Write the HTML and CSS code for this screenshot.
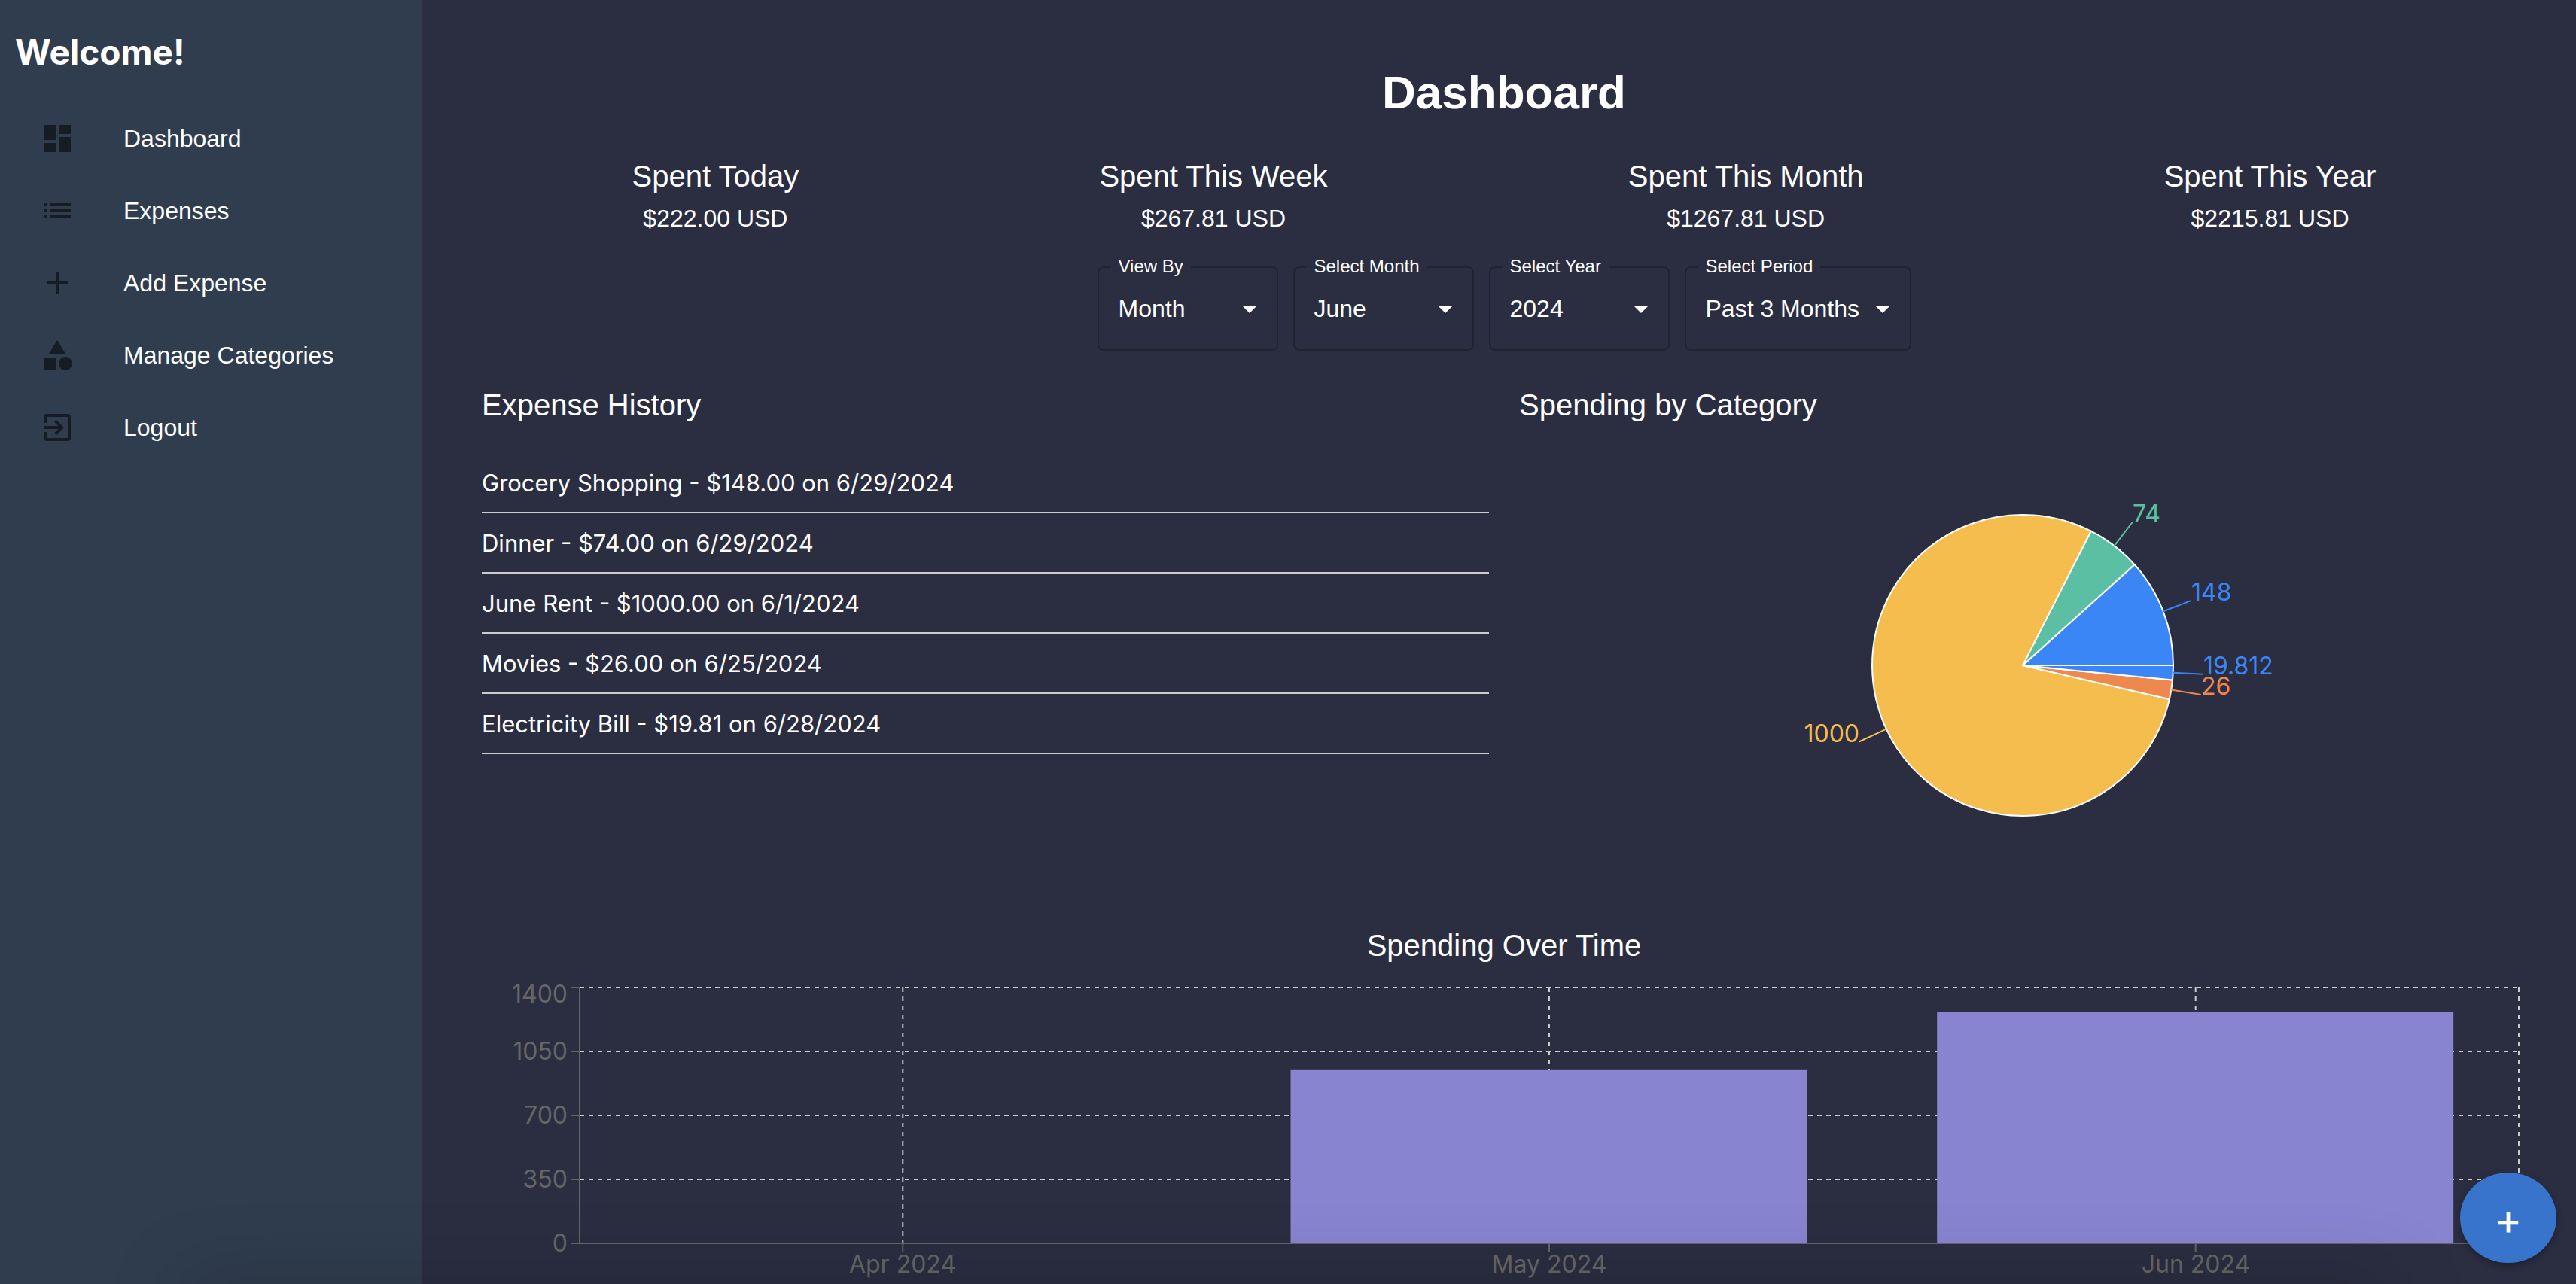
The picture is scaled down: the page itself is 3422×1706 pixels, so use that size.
FILE: index.html
```html
<!DOCTYPE html>
<html lang="en">
<head>
<meta charset="utf-8">
<title>Dashboard</title>
<link rel="stylesheet" href="styles.css">
</head>
<body>
<div class="app">
  <aside class="sidebar">
    <h2 class="welcome">Welcome!</h2>
    <nav class="nav">
      <a class="nav-item" href="#dashboard"><svg class="icon" viewBox="0 0 24 24" aria-hidden="true"><path d="M3 13h8V3H3v10zm0 8h8v-6H3v6zm10 0h8V11h-8v10zm0-18v6h8V3h-8z"/></svg>Dashboard</a>
      <a class="nav-item" href="#expenses"><svg class="icon" viewBox="0 0 24 24" aria-hidden="true"><path d="M3 13h2v-2H3v2zm0 4h2v-2H3v2zm0-8h2V7H3v2zm4 4h14v-2H7v2zm0 4h14v-2H7v2zM7 7v2h14V7H7z"/></svg>Expenses</a>
      <a class="nav-item" href="#add"><svg class="icon" viewBox="0 0 24 24" aria-hidden="true"><path d="M19 13h-6v6h-2v-6H5v-2h6V5h2v6h6v2z"/></svg>Add Expense</a>
      <a class="nav-item" href="#categories"><svg class="icon" viewBox="0 0 24 24" aria-hidden="true"><path d="M12 2l-5.500 9h11z"/><circle cx="17.500" cy="17.500" r="4.500"/><path d="M3 13.500h8v8H3z"/></svg>Manage Categories</a>
      <a class="nav-item" href="#logout"><svg class="icon" viewBox="0 0 24 24" aria-hidden="true"><path d="M10.090 15.590L11.500 17l5-5-5-5-1.410 1.410L12.670 11H3v2h9.670l-2.580 2.590zM19 3H5c-1.110 0-2 .9-2 2v4h2V5h14v14H5v-4H3v4c0 1.100.89 2 2 2h14c1.100 0 2-.9 2-2V5c0-1.100-.9-2-2-2z"/></svg>Logout</a>
    </nav>
  </aside>

  <main class="main">
    <h1 class="title">Dashboard</h1>

    <section class="stats">
      <div class="stat"><h2 class="heading">Spent Today</h2><p class="amount">$222.00 USD</p></div>
      <div class="stat"><h2 class="heading">Spent This Week</h2><p class="amount">$267.81 USD</p></div>
      <div class="stat"><h2 class="heading">Spent This Month</h2><p class="amount">$1267.81 USD</p></div>
      <div class="stat"><h2 class="heading">Spent This Year</h2><p class="amount">$2215.81 USD</p></div>
    </section>

    <form class="filters">
      <div class="field">
        <label class="field-label" for="view-by">View By</label>
        <select class="field-select" id="view-by"><option>Month</option></select>
        <svg class="field-arrow" viewBox="0 0 24 24" aria-hidden="true"><path d="M7 10l5 5 5-5z"/></svg>
      </div>
      <div class="field">
        <label class="field-label" for="month">Select Month</label>
        <select class="field-select" id="month"><option>June</option></select>
        <svg class="field-arrow" viewBox="0 0 24 24" aria-hidden="true"><path d="M7 10l5 5 5-5z"/></svg>
      </div>
      <div class="field">
        <label class="field-label" for="year">Select Year</label>
        <select class="field-select" id="year"><option>2024</option></select>
        <svg class="field-arrow" viewBox="0 0 24 24" aria-hidden="true"><path d="M7 10l5 5 5-5z"/></svg>
      </div>
      <div class="field">
        <label class="field-label" for="period">Select Period</label>
        <select class="field-select" id="period"><option>Past 3 Months</option></select>
        <svg class="field-arrow" viewBox="0 0 24 24" aria-hidden="true"><path d="M7 10l5 5 5-5z"/></svg>
      </div>
    </form>

    <div class="panels">
      <section>
        <h2 class="heading">Expense History</h2>
        <ul class="expenses">
          <li class="expense">Grocery Shopping - $148.00 on 6/29/2024</li>
          <li class="expense">Dinner - $74.00 on 6/29/2024</li>
          <li class="expense">June Rent - $1000.00 on 6/1/2024</li>
          <li class="expense">Movies - $26.00 on 6/25/2024</li>
          <li class="expense">Electricity Bill - $19.81 on 6/28/2024</li>
        </ul>
      </section>
      <section>
        <h2 class="heading">Spending by Category</h2>
        <svg class="pie" viewBox="-400 -300 800 600" role="img" aria-label="Spending by category">
          <g class="slices">
            <path class="blue" d="M0 0L200 0A200 200 0 0 0 148.600 -133.900Z"/>
            <path class="green" d="M0 0L148.600 -133.900A200 200 0 0 0 90.650 -178.300Z"/>
            <path class="yellow" d="M0 0L90.650 -178.300A200 200 0 1 0 194.900 45Z"/>
            <path class="orange" d="M0 0L194.900 45A200 200 0 0 0 199 19.600Z"/>
            <path class="blue" d="M0 0L199 19.600A200 200 0 0 0 200 0Z"/>
          </g>
          <g class="leaders">
            <path class="blue-line" d="M186.700 -71.700L224 -86.100"/>
            <path class="green-line" d="M121.600 -158.700L146 -190.500"/>
            <path class="yellow-line" d="M-181.200 84.600L-217.500 101.500"/>
            <path class="orange-line" d="M197.400 32.400L236.800 38.900"/>
            <path class="blue-line" d="M199.800 9.800L239.700 11.800"/>
          </g>
          <text class="blue" x="224" y="-86">148</text>
          <text class="green" x="146" y="-190">74</text>
          <text class="yellow" x="-217" y="102" text-anchor="end">1000</text>
          <text class="orange" x="237" y="39">26</text>
          <text class="blue" x="240" y="12">19.812</text>
        </svg>
      </section>
    </div>

    <section class="history">
      <h2 class="heading heading-center">Spending Over Time</h2>
      <svg class="bars" viewBox="0 0 2716 400" role="img" aria-label="Spending over time">
        <g class="grid">
          <path d="M130 10H2706M130 95H2706M130 180H2706M130 265H2706"/>
          <path d="M559.300 10V350"/><path d="M1418 10V350"/><path d="M2276.700 10V350"/><path d="M2706 10V350"/>
        </g>
        <path class="axis" d="M118 350H2706M130 10V350M118 10H130M118 95H130M118 180H130M118 265H130M559.300 350V362M1418 350V362M2276.700 350V362"/>
        <g class="columns">
          <rect x="1074.500" y="119.800" width="686" height="230.200"/>
          <rect x="1933.200" y="42.100" width="686" height="307.900"/>
        </g>
        <g class="ticks" text-anchor="end">
          <text x="114" y="30">1400</text>
          <text x="114" y="106">1050</text>
          <text x="114" y="191">700</text>
          <text x="114" y="276">350</text>
          <text x="114" y="361">0</text>
        </g>
        <g class="ticks" text-anchor="middle">
          <text x="559" y="389">Apr 2024</text>
          <text x="1418" y="389">May 2024</text>
          <text x="2277" y="389">Jun 2024</text>
        </g>
      </svg>
    </section>
  </main>
</div>
<button class="fab" type="button" aria-label="Add expense">+</button>
</body>
</html>
```
FILE: styles.css
```css
* { box-sizing: border-box; }

body {
  margin: 0;
  background: #2b2e41;
  color: #fff;
  font-family: "Liberation Sans", Arial, sans-serif;
  font-size: 32px;
}

h1, h2, p, ul { margin: 0; padding: 0; }

.app {
  display: flex;
  min-height: 100vh;
}

/* Soft shade along the bottom edge of the window */
.app::after {
  content: "";
  position: fixed;
  right: 240px;
  bottom: -40px;
  left: 240px;
  height: 40px;
  box-shadow: 0 0 100px rgba(0, 0, 0, .25);
  pointer-events: none;
}

/* Sidebar */
.sidebar {
  flex: 0 0 560px;
  padding: 40px 20px;
  background: #303d4e;
}

.welcome {
  font: bold 46px/58px Inter, sans-serif;
}

.nav {
  display: flex;
  flex-direction: column;
  margin-top: 38px;
}

.nav-item {
  display: flex;
  align-items: center;
  gap: 64px;
  padding: 24px 32px;
  color: #fff;
  line-height: 48px;
  text-decoration: none;
}

.icon {
  width: 48px;
  height: 48px;
  fill: #161c24;
}

/* Main column */
.main {
  flex: 1;
  min-width: 0;
  padding: 86px 66px 0 80px;
}

.title {
  font-size: 62px;
  line-height: 74px;
  text-align: center;
}

.heading {
  font-size: 40px;
  font-weight: 400;
  line-height: 64px;
}

.heading-center { text-align: center; }

.stats {
  display: flex;
  justify-content: space-around;
  margin-top: 42px;
  text-align: center;
}

.amount { line-height: 48px; }

/* Filters */
.filters {
  display: flex;
  justify-content: center;
  gap: 20px;
  margin: 40px 0;
}

.field { position: relative; }

.field-label {
  position: absolute;
  top: -14px;
  left: 18px;
  padding: 0 10px;
  background: #2b2e41;
  font-size: 24px;
  line-height: 28px;
}

.field-select {
  display: block;
  min-width: 240px;
  height: 112px;
  padding: 0 66px 0 26px;
  appearance: none;
  background: none;
  border: 2px solid #222331;
  border-radius: 8px;
  color: #fff;
  font: inherit;
}

.field-arrow {
  position: absolute;
  top: 32px;
  right: 14px;
  width: 48px;
  height: 48px;
  fill: #fff;
  pointer-events: none;
}

/* Panels */
.panels {
  display: grid;
  grid-template-columns: 1fr 1fr;
  gap: 40px;
}

.expenses {
  margin-top: 32px;
  list-style: none;
}

.expense {
  padding: 21px 0 19px;
  border-bottom: 2px solid #ccc;
  font-family: Inter, sans-serif;
  font-size: 31px;
  line-height: 38px;
}

/* Charts */
.pie {
  display: block;
  width: 100%;
  height: 600px;
  margin-top: 14px;
  font-family: Inter, sans-serif;
}

.slices { stroke: #fff; stroke-width: 2; }
.leaders { fill: none; stroke-width: 2; }
.blue { fill: #3b86f7; }
.green { fill: #5bc0a3; }
.yellow { fill: #f5bd4d; }
.orange { fill: #ee884f; }
.blue-line { stroke: #3b86f7; }
.green-line { stroke: #5bc0a3; }
.yellow-line { stroke: #f5bd4d; }
.orange-line { stroke: #ee884f; }

.history { margin-top: 40px; }

.bars {
  display: block;
  width: 100%;
  height: auto;
  margin-top: 14px;
  font-family: Inter, sans-serif;
}

.grid { fill: none; stroke: #ccc; stroke-width: 2; stroke-dasharray: 6 6; }
.axis { fill: none; stroke: #666; stroke-width: 2; }
.columns { fill: #8884cf; }
.ticks { fill: #666; }

.fab {
  position: fixed;
  right: 26px;
  bottom: 28px;
  width: 128px;
  height: 120px;
  padding: 4px 0 0;
  border: 0;
  border-radius: 50%;
  background: #3874cb;
  box-shadow: 0 4px 10px rgba(0, 0, 0, .3);
  color: #fff;
  font: 56px Inter, sans-serif;
}
```
